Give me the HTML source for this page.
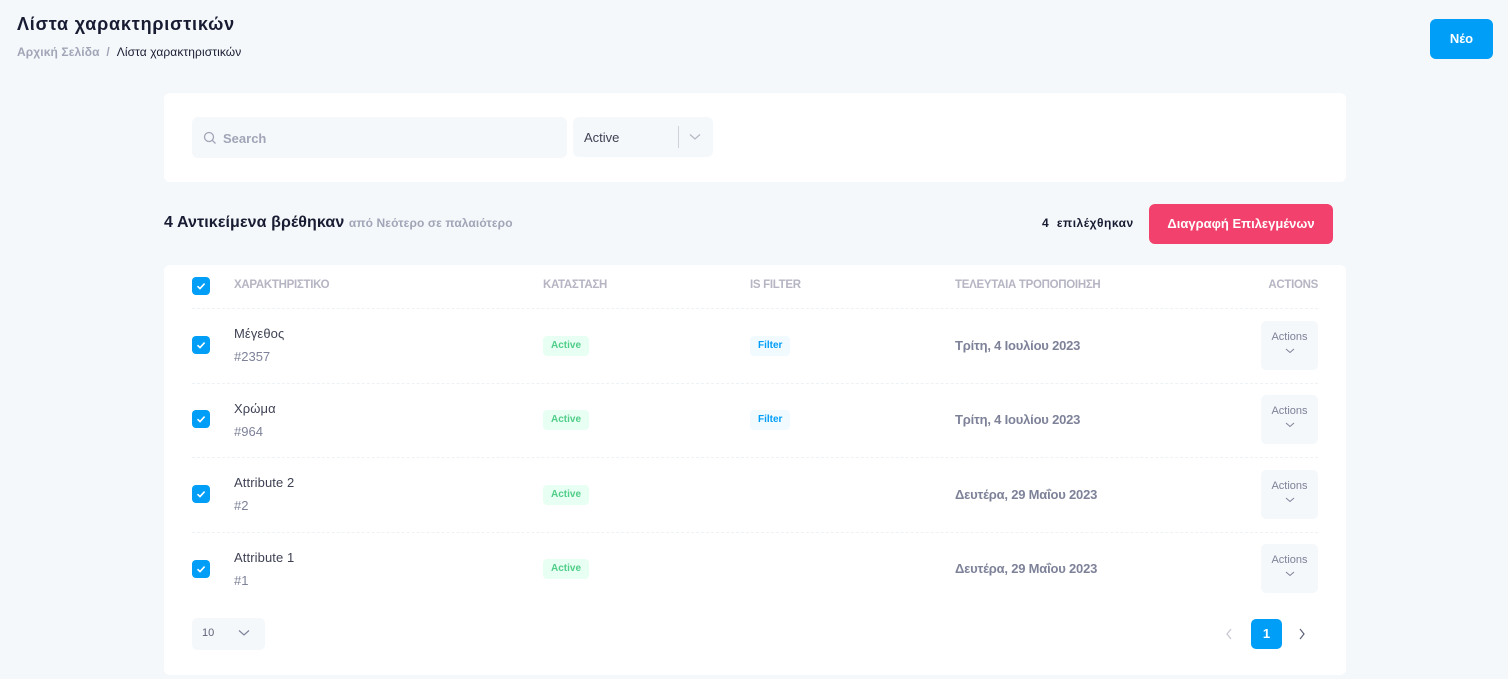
<!DOCTYPE html>
<html><head><meta charset="utf-8"><style>
*{box-sizing:border-box;margin:0;padding:0}
body{width:1508px;height:679px;background:#f5f8fa;font-family:"Liberation Sans","Noto Sans CJK SC",sans-serif;position:relative;overflow:hidden;color:#181c32}
.a{position:absolute;white-space:nowrap}
.card{position:absolute;background:#fff;border-radius:6px}
.cb{position:absolute;width:18px;height:18px;background:#009ef7;border-radius:4px}
.cb svg{position:absolute;left:3px;top:3px}
.hd{font-size:11.5px;color:#b5b5c3;font-weight:bold;letter-spacing:-0.3px}
.dv{position:absolute;left:192px;width:1126px;border-top:1px dashed #eff2f5}
.nm{font-size:13px;color:#3f4254;letter-spacing:0.1px}
.id{font-size:13px;color:#7e8299}
.badge{position:absolute;height:20px;line-height:20px;padding:0 8px;border-radius:4px;font-size:10px;font-weight:bold}
.act{background:#e8fff3;color:#50cd89}
.flt{background:#f1faff;color:#009ef7}
.dt{font-size:13px;color:#7e8299;font-weight:bold;letter-spacing:-0.2px}
.ab{position:absolute;left:1261px;width:57px;height:49px;background:#f5f8fa;border-radius:5px;font-size:11px;color:#7e8299;text-align:center;padding-top:10px}
</style></head><body>
<div class="a" style="left:17px;top:14px;font-size:18px;font-weight:bold;letter-spacing:0.8px">Λίστα χαρακτηριστικών</div>
<div class="a" style="left:17px;top:45px;font-size:12px;color:#a1a5b7;font-weight:bold;letter-spacing:0.1px">Αρχική Σελίδα &nbsp;/&nbsp; <span style="color:#181c32;font-weight:normal">Λίστα χαρακτηριστικών</span></div>
<div class="a" style="left:1430px;top:19px;width:63px;height:40px;background:#009ef7;border-radius:6px;color:#fff;font-size:13px;font-weight:bold;text-align:center;line-height:40px">Νέο</div>

<div class="card" style="left:164px;top:93px;width:1182px;height:89px"></div>
<div class="a" style="left:192px;top:117px;width:375px;height:41px;background:#f5f8fa;border-radius:6px"></div>
<svg class="a" style="left:203px;top:131px" width="14" height="14" viewBox="0 0 14 14"><circle cx="6" cy="6" r="4.5" fill="none" stroke="#a1a5b7" stroke-width="1.3"/><path d="M9.3 9.3L12.5 12.5" stroke="#a1a5b7" stroke-width="1.3"/></svg>
<div class="a" style="left:223px;top:131px;font-size:13px;color:#a1a5b7;font-weight:bold">Search</div>
<div class="a" style="left:573px;top:117px;width:140px;height:40px;background:#f5f8fa;border-radius:6px"></div>
<div class="a" style="left:584px;top:130px;font-size:13px;color:#3f4254">Active</div>
<div class="a" style="left:678px;top:126px;width:1px;height:22px;background:#d0d3dc"></div>
<svg class="a" style="left:689px;top:133px" width="12" height="8"><path d="M1 1.5L6 6L11 1.5" fill="none" stroke="#b5b5c3" stroke-width="1.2"/></svg>

<div class="a" style="left:164px;top:214px;font-size:16px;color:#181c32;font-weight:bold;letter-spacing:0.1px">4 Αντικείμενα βρέθηκαν <span style="font-size:12px;color:#a1a5b7">από Νεότερο σε παλαιότερο</span></div>
<div class="a" style="left:1042px;top:216px;font-size:12px;font-weight:bold;letter-spacing:0.5px">4 &nbsp;επιλέχθηκαν</div>
<div class="a" style="left:1149px;top:204px;width:184px;height:40px;background:#f1416c;border-radius:6px;color:#fff;font-size:13px;font-weight:bold;text-align:center;line-height:40px">Διαγραφή Επιλεγμένων</div>

<div class="card" style="left:164px;top:265px;width:1182px;height:410px"></div>
<div class="cb" style="left:192px;top:277px"><svg width="12" height="12"><path d="M2.5 6.2L5 8.6L9.6 3.6" fill="none" stroke="#fff" stroke-width="1.6"/></svg></div>
<div class="a hd" style="left:234px;top:279px">ΧΑΡΑΚΤΗΡΙΣΤΙΚΟ</div>
<div class="a hd" style="left:543px;top:279px">ΚΑΤΑΣΤΑΣΗ</div>
<div class="a hd" style="left:750px;top:279px">IS FILTER</div>
<div class="a hd" style="left:955px;top:279px">ΤΕΛΕΥΤΑΙΑ ΤΡΟΠΟΠΟΙΗΣΗ</div>
<div class="a hd" style="right:190px;top:279px">ACTIONS</div>
<div class="dv" style="top:308px"></div>

<div class="cb" style="left:192px;top:336px"><svg width="12" height="12"><path d="M2.5 6.2L5 8.6L9.6 3.6" fill="none" stroke="#fff" stroke-width="1.6"/></svg></div>
<div class="a nm" style="left:234px;top:326px">Μέγεθος</div>
<div class="a id" style="left:234px;top:349px">#2357</div>
<div class="badge act" style="left:543px;top:336px">Active</div>
<div class="badge flt" style="left:750px;top:336px">Filter</div>
<div class="a dt" style="left:955px;top:338px">Τρίτη, 4 Ιουλίου 2023</div>
<div class="ab" style="top:321px">Actions<br><svg width="10" height="14"><path d="M1 6L5 9.5L9 6" fill="none" stroke="#7e8299" stroke-width="1"/></svg></div>
<div class="dv" style="top:383px"></div>

<div class="cb" style="left:192px;top:410px"><svg width="12" height="12"><path d="M2.5 6.2L5 8.6L9.6 3.6" fill="none" stroke="#fff" stroke-width="1.6"/></svg></div>
<div class="a nm" style="left:234px;top:401px">Χρώμα</div>
<div class="a id" style="left:234px;top:424px">#964</div>
<div class="badge act" style="left:543px;top:410px">Active</div>
<div class="badge flt" style="left:750px;top:410px">Filter</div>
<div class="a dt" style="left:955px;top:412px">Τρίτη, 4 Ιουλίου 2023</div>
<div class="ab" style="top:395px">Actions<br><svg width="10" height="14"><path d="M1 6L5 9.5L9 6" fill="none" stroke="#7e8299" stroke-width="1"/></svg></div>
<div class="dv" style="top:457px"></div>

<div class="cb" style="left:192px;top:485px"><svg width="12" height="12"><path d="M2.5 6.2L5 8.6L9.6 3.6" fill="none" stroke="#fff" stroke-width="1.6"/></svg></div>
<div class="a nm" style="left:234px;top:475px">Attribute 2</div>
<div class="a id" style="left:234px;top:498px">#2</div>
<div class="badge act" style="left:543px;top:485px">Active</div>
<div class="a dt" style="left:955px;top:487px">Δευτέρα, 29 Μαΐου 2023</div>
<div class="ab" style="top:470px">Actions<br><svg width="10" height="14"><path d="M1 6L5 9.5L9 6" fill="none" stroke="#7e8299" stroke-width="1"/></svg></div>
<div class="dv" style="top:532px"></div>

<div class="cb" style="left:192px;top:560px"><svg width="12" height="12"><path d="M2.5 6.2L5 8.6L9.6 3.6" fill="none" stroke="#fff" stroke-width="1.6"/></svg></div>
<div class="a nm" style="left:234px;top:550px">Attribute 1</div>
<div class="a id" style="left:234px;top:573px">#1</div>
<div class="badge act" style="left:543px;top:559px">Active</div>
<div class="a dt" style="left:955px;top:561px">Δευτέρα, 29 Μαΐου 2023</div>
<div class="ab" style="top:544px">Actions<br><svg width="10" height="14"><path d="M1 6L5 9.5L9 6" fill="none" stroke="#7e8299" stroke-width="1"/></svg></div>

<div class="a" style="left:192px;top:618px;width:73px;height:32px;background:#f5f8fa;border-radius:5px"></div>
<div class="a" style="left:202px;top:627px;font-size:11px;color:#5e6278">10</div>
<svg class="a" style="left:238px;top:629px" width="12" height="8"><path d="M1 1.5L6 6L11 1.5" fill="none" stroke="#7e8299" stroke-width="1.2"/></svg>
<svg class="a" style="left:1225px;top:628px" width="8" height="12"><path d="M6 1L2 6L6 11" fill="none" stroke="#c4c6d0" stroke-width="1.2"/></svg>
<div class="a" style="left:1251px;top:619px;width:31px;height:30px;background:#009ef7;border-radius:5px;color:#fff;font-size:13px;font-weight:bold;text-align:center;line-height:30px">1</div>
<svg class="a" style="left:1298px;top:628px" width="8" height="12"><path d="M2 1L6 6L2 11" fill="none" stroke="#5e6278" stroke-width="1.2"/></svg>
</body></html>
